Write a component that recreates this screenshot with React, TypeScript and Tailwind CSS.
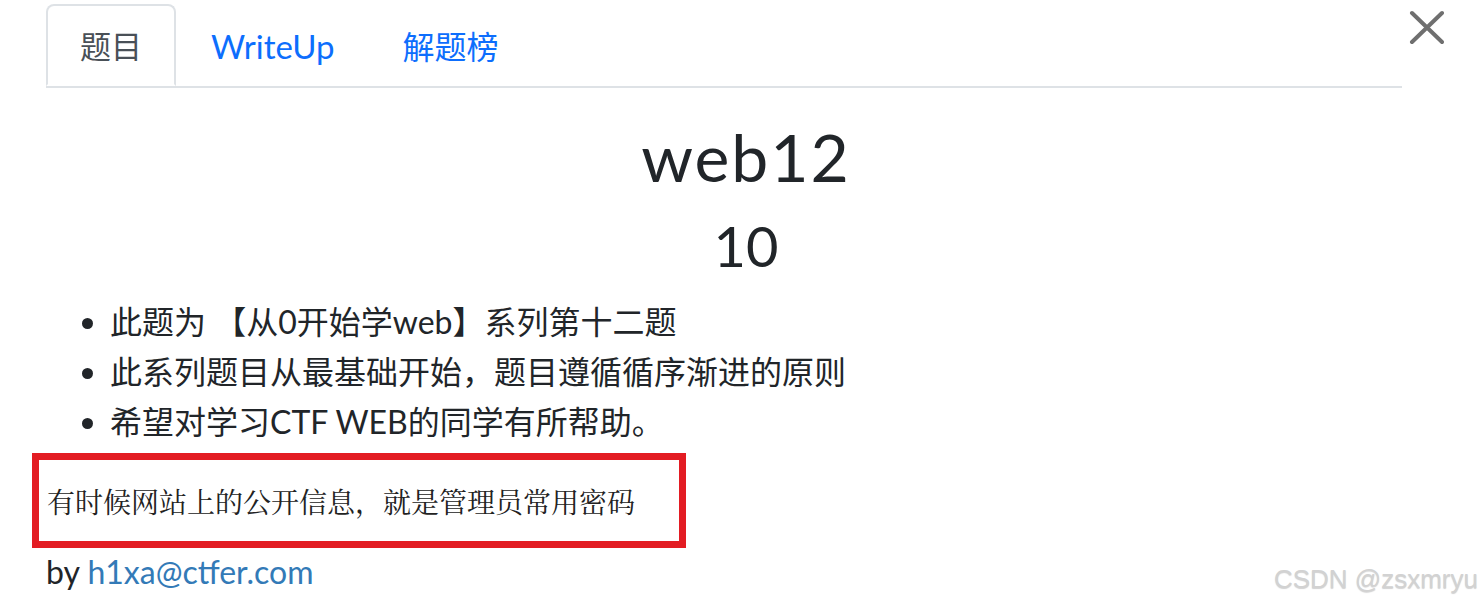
export default function App() {
  const bullets = [
    "此题为 【从0开始学web】系列第十二题",
    "此系列题目从最基础开始，题目遵循循序渐进的原则",
    "希望对学习CTF WEB的同学有所帮助。",
  ];

  return (
    <div className="relative w-[1484px] h-[606px] overflow-hidden bg-white text-[#212529] font-['Lato','Noto_Sans_CJK_SC',sans-serif]">
      {/* Tabs + close */}
      <div className="flex items-start pl-[46px]">
        <ul className="flex w-[1356px] pt-[4px] border-b-2 border-[#dee2e6]">
          <li className="-mb-[2px] flex h-[82px] items-center rounded-t-[8px] border-2 border-[#dee2e6] border-b-white bg-white px-[32px] pt-[3px] text-[31px] text-[#495057]">
            题目
          </li>
          <li className="flex h-[82px] items-center border-2 border-transparent pl-[33px] pr-[31px] pt-[3px] text-[33px] text-[#0d6efd]">
            WriteUp
          </li>
          <li className="flex h-[82px] items-center border-2 border-transparent pl-[33px] pr-[31px] pt-[3px] text-[32px] text-[#0d6efd]">
            解题榜
          </li>
        </ul>
        <button className="ml-[6px] mt-[9px] text-[#6f6f6f]">
          <svg width="36" height="36" viewBox="0 0 36 36" fill="none" stroke="currentColor" strokeWidth="4" strokeLinecap="round">
            <path d="M4 4L34 33M34 4L4 33" />
          </svg>
        </button>
      </div>

      {/* Body */}
      <div className="pl-[46px] pr-[38px]">
        <h1 className="mt-[29px] text-center text-[66px] leading-[1.2] tracking-[2px]">web12</h1>
        <h2 className="mt-[16px] text-center text-[56px] leading-[1.2]">10</h2>
        <ul className="mt-[18px] list-disc pl-[64px] text-[32px]">
          {bullets.map((b) => (
            <li key={b} className="h-[50px] leading-[50px]">
              {b}
            </li>
          ))}
        </ul>
        <div className="-ml-[14px] mt-[6px] flex h-[95px] w-[654px] items-center border-[7px] border-[#e31c23] pl-[8px] font-['Noto_Serif_CJK_SC','Liberation_Serif','Noto_Sans_CJK_SC',serif] text-[28px] text-[#222]">
          有时候网站上的公开信息，就是管理员常用密码
        </div>
        <p className="mt-[5px] text-[32px] leading-[38px]">
          by <a className="text-[#337ab7]">h1xa@ctfer.com</a>
        </p>
      </div>

      {/* Watermark */}
      <div className="absolute bottom-[12px] right-[6px] font-['Liberation_Sans',sans-serif] text-[26px] leading-[30px] text-[#d2d2d2] [text-shadow:0_1px_1px_rgba(0,0,0,0.18)]">
        CSDN @zsxmryu
      </div>
    </div>
  );
}
